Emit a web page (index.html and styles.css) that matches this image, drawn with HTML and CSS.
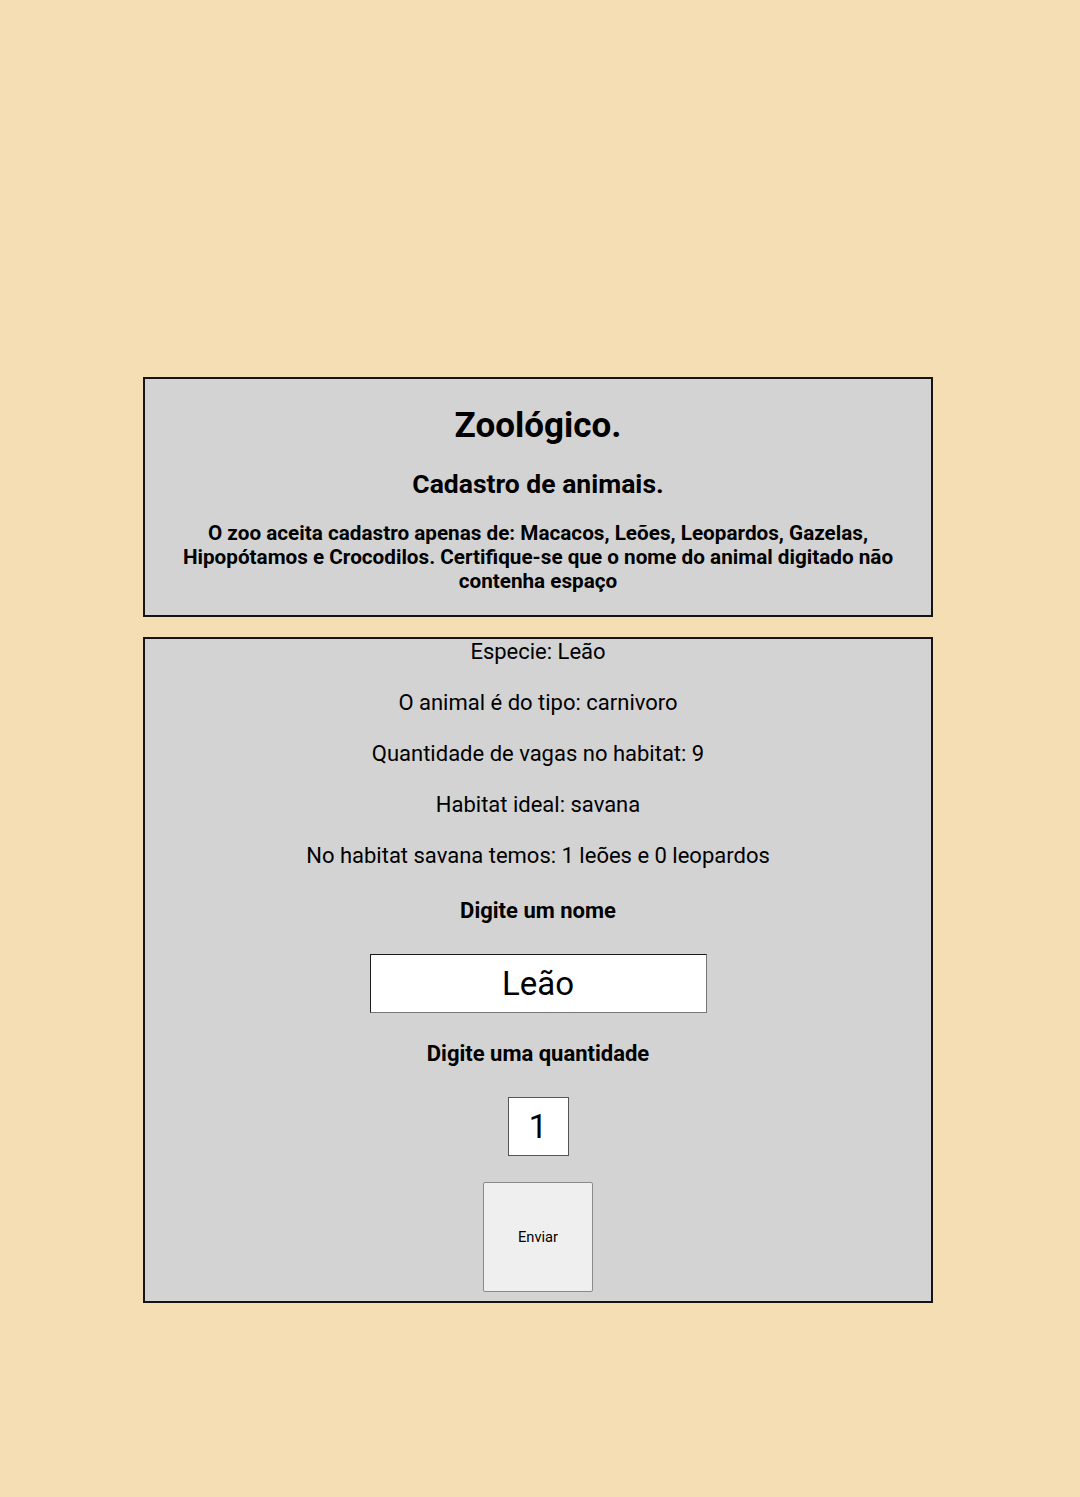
FILE: index.html
```html
<!DOCTYPE html>
<html lang="pt-BR">
<head>
<meta charset="utf-8">
<title>Zoológico</title>
<link rel="stylesheet" href="styles.css">
</head>
<body>
<main class="wrap">
  <header class="card intro">
    <h1 class="title">Zoológico.</h1>
    <h2 class="subtitle">Cadastro de animais.</h2>
    <p class="notice">O zoo aceita cadastro apenas de: Macacos, Leões, Leopardos, Gazelas, Hipopótamos e Crocodilos. Certifique-se que o nome do animal digitado não contenha espaço</p>
  </header>
  <section class="card form">
    <p class="info">Especie: Leão</p>
    <p class="info">O animal é do tipo: carnivoro</p>
    <p class="info">Quantidade de vagas no habitat: 9</p>
    <p class="info">Habitat ideal: savana</p>
    <p class="info">No habitat savana temos: 1 leões e 0 leopardos</p>
    <label class="label label-name" for="nome">Digite um nome</label>
    <input class="name-input" id="nome" type="text" value="Leão">
    <label class="label" for="qtd">Digite uma quantidade</label>
    <input class="qty-input" id="qtd" type="text" value="1">
    <button class="send" type="button">Enviar</button>
  </section>
</main>
</body>
</html>
```

FILE: styles.css
```css
html, body {
  margin: 0;
  padding: 0;
}
body {
  background: #f5deb3;
  font-family: Roboto, "Liberation Sans", Arial, sans-serif;
  color: #000;
  min-height: 1497px;
}
.wrap {
  width: 790px;
  margin-left: 143px;
  padding-top: 377px;
  display: flex;
  flex-direction: column;
  gap: 20px;
}
.card {
  background: #d3d3d3;
  border: 2px solid #151515;
  box-sizing: border-box;
  text-align: center;
  display: flex;
  flex-direction: column;
  align-items: center;
}
.intro {
  padding: 27px 30px 22px;
}
.title {
  font-size: 35px;
  font-weight: 700;
  line-height: 40px;
  margin: 0;
}
.subtitle {
  font-size: 26.5px;
  font-weight: 700;
  line-height: 30px;
  margin: 23px 0 0;
}
.notice {
  font-size: 20.7px;
  font-weight: 700;
  line-height: 24px;
  margin: 22px 0 0;
}
.form {
  padding: 0 0 9px;
}
.info {
  font-size: 22px;
  line-height: 26px;
  margin: 0 0 25px;
}
.info:nth-of-type(5) {
  margin-bottom: 29px;
}
.label {
  font-size: 22px;
  font-weight: 700;
  line-height: 26px;
}
.name-input {
  margin: 30px 0 28px;
  width: 337px;
  height: 59px;
  box-sizing: border-box;
  background: #fff;
  border: 1px solid;
  border-color: #1a1a1a #777 #777 #1a1a1a;
  font-family: Roboto, "Liberation Sans", Arial, sans-serif;
  font-size: 33px;
  text-align: center;
  color: #000;
  padding: 0;
  outline: none;
}
.qty-input {
  margin: 30px 0 26px;
  width: 61px;
  height: 59px;
  box-sizing: border-box;
  background: #fff;
  border: 1px solid #555;
  font-family: Roboto, "Liberation Sans", Arial, sans-serif;
  font-size: 33px;
  text-align: center;
  color: #000;
  padding: 0;
  outline: none;
}
.send {
  width: 110px;
  height: 110px;
  background: #efefef;
  border: 1px solid #8a8a8a;
  border-radius: 2px;
  font-family: Roboto, "Liberation Sans", Arial, sans-serif;
  font-size: 14.7px;
  color: #000;
  padding: 0;
}
```
